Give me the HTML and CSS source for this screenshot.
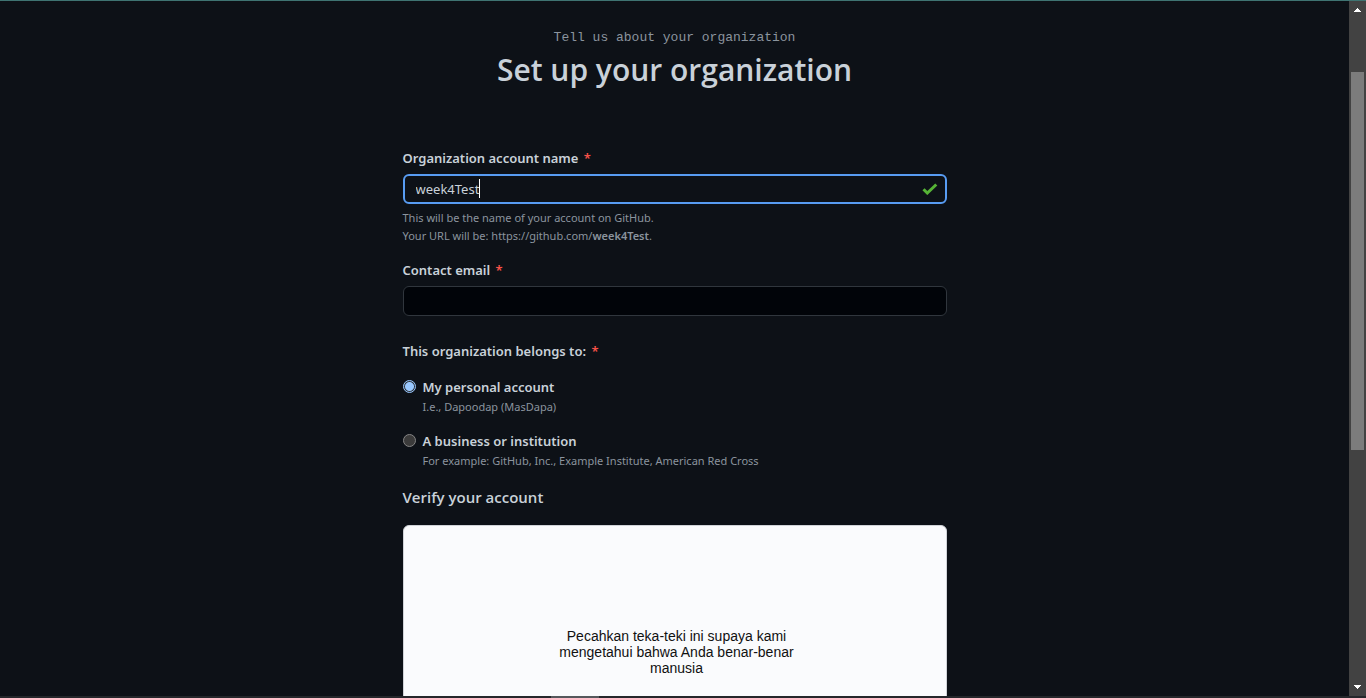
FILE: index.html
```html
<!DOCTYPE html>
<html lang="en">
<head>
<meta charset="utf-8">
<title>Set up your organization</title>
<link rel="stylesheet" href="styles.css">
</head>
<body>
<div class="window">
  <div class="viewport">
    <main class="page">
      <header class="intro">
        <p class="intro-lead">Tell us about your organization</p>
        <h1 class="intro-title">Set up your organization</h1>
      </header>
      <form class="form">
        <div class="field">
          <label class="label" for="org-name">Organization account name <span class="required">*</span></label>
          <div class="input-wrap">
            <input class="input input-focused" id="org-name" type="text" value="week4Test">
            <span class="caret"></span>
            <svg class="check" viewBox="0 0 16 12" aria-hidden="true"><path d="M1.5 6.2L5.3 10L14.3 1.5" fill="none" stroke="#56b336" stroke-width="3"/></svg>
          </div>
          <p class="note">This will be the name of your account on GitHub.<br>Your URL will be: https://github.com/<b class="note-strong">week4Test</b>.</p>
        </div>
        <div class="field">
          <label class="label" for="email">Contact email <span class="required">*</span></label>
          <div class="input-wrap"><input class="input" id="email" type="email"></div>
        </div>
        <fieldset class="choices">
          <legend class="label legend">This organization belongs to: <span class="required">*</span></legend>
          <div class="choice">
            <input class="radio" type="radio" name="owner" id="personal" checked>
            <div class="choice-text">
              <label class="label" for="personal">My personal account</label>
              <p class="note choice-note">I.e., Dapoodap (MasDapa)</p>
            </div>
          </div>
          <div class="choice">
            <input class="radio" type="radio" name="owner" id="business">
            <div class="choice-text">
              <label class="label" for="business">A business or institution</label>
              <p class="note choice-note">For example: GitHub, Inc., Example Institute, American Red Cross</p>
            </div>
          </div>
        </fieldset>
        <h2 class="verify-title">Verify your account</h2>
        <section class="captcha">
          <p class="captcha-text">Pecahkan teka-teki ini supaya kami mengetahui bahwa Anda benar-benar manusia</p>
        </section>
      </form>
    </main>
    <div class="scrollbar" aria-hidden="true">
      <svg class="arrow" viewBox="0 0 7 4"><path d="M0 4V3H1V2H2V1H3V0H4V1H5V2H6V3H7V4Z" fill="#fff"/></svg>
      <div class="track"><div class="thumb"></div></div>
      <svg class="arrow" viewBox="0 0 7 4"><path d="M0 0V1H1V2H2V3H3V4H4V3H5V2H6V1H7V0Z" fill="#fff"/></svg>
    </div>
  </div>
  <div class="taskbar"><div class="taskbar-item"></div></div>
</div>
</body>
</html>
```
FILE: styles.css
```css
* { box-sizing: border-box; }
body {
  margin: 0;
  background: #0d1117;
  color: #c9d1d9;
  font-family: "Noto Sans", "Open Sans", sans-serif;
  font-size: 13px;
  line-height: 20px;
}
p, h1, h2 { margin: 0; }
.window {
  display: flex;
  flex-direction: column;
  height: 100vh;
  overflow: hidden;
  border-top: 1px solid #3f7472;
}
.viewport { display: flex; flex: 1; min-height: 0; }
.page { flex: 1; min-width: 0; overflow: hidden; padding: 25px 16px 0; }
.intro { text-align: center; margin-bottom: 56px; }
.intro-lead {
  color: #8b949e;
  font-family: "Liberation Mono", monospace;
  font-size: 13px;
  line-height: 24px;
}
.intro-title { font-family: "Open Sans", sans-serif; font-size: 30px; font-weight: 600; line-height: 40px; }
.form { max-width: 544px; margin: 0 auto; }
.field { margin-bottom: 13px; }
.label { font-weight: 600; }
.field > .label { display: block; padding-top: 2px; }
.required { color: #f85149; margin-left: 2px; }
.input-wrap { position: relative; margin-top: 6px; }
.input {
  display: block;
  width: 100%;
  height: 30px;
  padding: 0 12px;
  border: 1px solid #30363d;
  border-radius: 6px;
  background: #010409;
  color: #c9d1d9;
  font: inherit;
  outline: none;
}
.input-focused { padding: 0 11px; border: 2px solid #589cf2; background: #0d1117; }
.caret { position: absolute; left: 76px; top: 5px; width: 1px; height: 19px; background: #fff; }
.check { position: absolute; right: 9px; top: 9px; width: 16px; height: 12px; }
.note { margin-top: 5px; color: #8b949e; font-size: 11px; line-height: 18px; }
.note-strong { font-weight: 600; }
.choices { margin: 0; padding: 0; border: 0; }
.legend { padding: 12px 0 1px; }
.choice { display: flex; align-items: flex-start; gap: 7px; margin-top: 15px; }
.choice-text { flex: 1; }
.choice-note { margin-top: 1px; }
.radio {
  appearance: none;
  flex: none;
  width: 13px;
  height: 13px;
  margin: 3px 0 0;
  border: 1px solid #858585;
  border-radius: 50%;
  background: #3b3b3b;
}
.radio:checked {
  border-color: #99c8ff;
  background: radial-gradient(circle, #99c8ff 4px, #30363d 5px);
}
.verify-title { margin-top: 15px; font-family: "Open Sans", sans-serif; font-size: 15px; font-weight: 600; line-height: 24px; }
.captcha {
  margin-top: 16px;
  min-height: 300px;
  padding: 102px 16px 0 20px;
  border: 1px solid #d0d3d8;
  border-radius: 6px;
  background: #fafbfd;
}
.captcha-text {
  max-width: 250px;
  margin: 0 auto;
  color: #111;
  font-family: "Liberation Sans", Arial, sans-serif;
  font-size: 14px;
  line-height: 16px;
  text-align: center;
}
.scrollbar {
  display: flex;
  flex-direction: column;
  align-items: center;
  width: 17px;
  padding: 7px 0;
  background: #424242;
}
.arrow { width: 7px; height: 4px; flex: none; }
.track { flex: 1; width: 13px; padding: 60px 0 3px; }
.thumb { height: 62%; min-height: 32px; background: #7c7c7c; }
.taskbar { height: 2px; background: #25272b; }
.taskbar-item { width: 48px; height: 2px; margin-left: 551px; background: #55585c; }
```
